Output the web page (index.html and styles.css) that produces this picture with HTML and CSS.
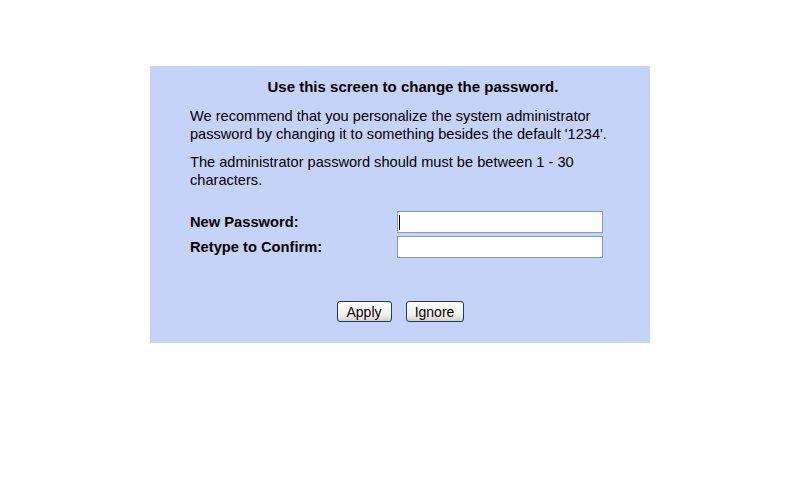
FILE: index.html
```html
<!DOCTYPE html>
<html lang="en">
<head>
    <meta charset="UTF-8">
    <title>Change Password</title>
    <link rel="stylesheet" href="styles.css">
</head>
<body>
    <div class="password-panel">
        <h1>Use this screen to change the password.</h1>
        <p>We recommend that you personalize the system administrator password by changing it to something besides the default '1234'.</p>
        <p>The administrator password should must be between 1 - 30 characters.</p>
        <form class="password-form">
            <div class="form-row">
                <label for="new_pw">New Password:</label>
                <input type="password" id="new_pw" class="caret">
            </div>
            <div class="form-row">
                <label for="confirm_pw">Retype to Confirm:</label>
                <input type="password" id="confirm_pw">
            </div>
            <div class="buttons">
                <button type="button" class="btn-apply">Apply</button>
                <button type="button" class="btn-ignore">Ignore</button>
            </div>
        </form>
    </div>
</body>
</html>
```

FILE: styles.css
```css
body {
    margin: 0;
    padding: 0;
    background-color: #ffffff;
    font-family: "Liberation Sans", Arial, sans-serif;
    font-size: 14.6px;
    color: #000;
}
.password-panel {
    width: 500px;
    height: 277px;
    box-sizing: border-box;
    margin: 66px auto 0;
    padding: 12px 30px 0 40px;
    background-color: #c6d3f8;
}
.password-panel h1 {
    margin: 0 0 13px;
    padding-left: 16px;
    text-align: center;
    font-size: 15px;
    line-height: 17px;
    font-weight: bold;
}
.password-panel p {
    margin: 0 0 11px;
    line-height: 17.5px;
}
.password-form {
    margin-top: 22px;
}
.form-row {
    display: grid;
    grid-template-columns: 207px 206px;
    align-items: center;
    margin-bottom: 3px;
}
.form-row label {
    font-weight: bold;
    font-size: 14.7px;
}
.form-row input {
    box-sizing: border-box;
    width: 206px;
    height: 22px;
    margin: 0;
    padding: 0 3px;
    border: 1px solid #7f9db9;
    background: #ffffff;
    outline: none;
}
.form-row input.caret {
    background: #ffffff linear-gradient(#000, #000) no-repeat 1px 3px / 1px 15px;
}
.buttons {
    display: flex;
    justify-content: center;
    gap: 14px;
    margin-top: 43px;
    padding-right: 10px;
}
.buttons button {
    height: 21px;
    padding: 1px 0 0;
    font-family: "Liberation Sans", Arial, sans-serif;
    font-size: 14px;
    color: #000;
    border: 1px solid #1c3a6e;
    border-radius: 3px;
    background: linear-gradient(#ffffff, #f1f0ea 70%, #d6d0c5);
}
.btn-apply {
    width: 55px;
}
.btn-ignore {
    width: 58px;
}
```
